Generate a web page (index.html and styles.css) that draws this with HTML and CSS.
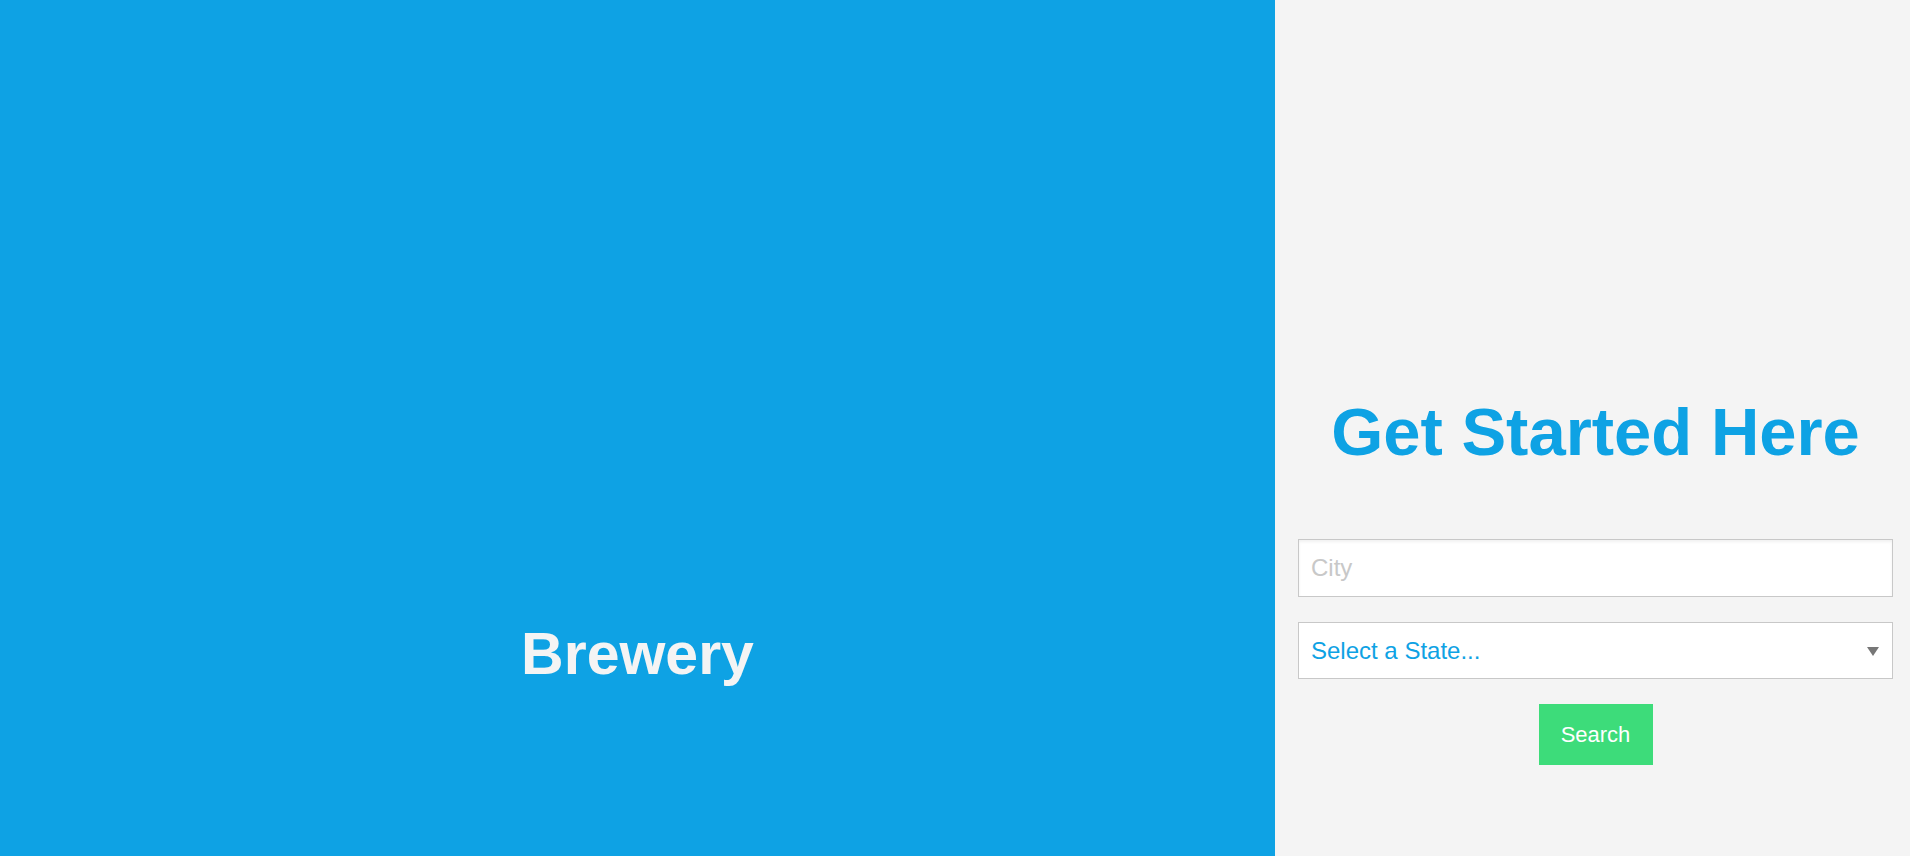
FILE: index.html
```html
<!DOCTYPE html>
<html lang="en">
<head>
<meta charset="utf-8">
<title>Brewery</title>
<link rel="stylesheet" href="styles.css">
</head>
<body>
<main class="page">
  <section class="hero">
    <h2 class="brand">Brewery</h2>
  </section>
  <section class="panel">
    <h1 class="title">Get Started Here</h1>
    <form class="search-form">
      <input class="field" type="text" placeholder="City">
      <div class="select-wrap">
        <select class="field select">
          <option>Select a State...</option>
        </select>
      </div>
      <div class="actions">
        <button class="btn" type="button">Search</button>
      </div>
    </form>
  </section>
</main>
</body>
</html>
```
FILE: styles.css
```css
html, body {
  margin: 0;
  padding: 0;
  height: 100%;
}
body {
  font-family: "Liberation Sans", Arial, sans-serif;
  background: #f4f4f4;
}
.page {
  display: flex;
  height: 856px;
  overflow: hidden;
}
.hero {
  width: 1275px;
  flex: none;
  background: #0ea2e4;
  box-sizing: border-box;
  padding-top: 621px;
  text-align: center;
}
.brand {
  margin: 0;
  font-size: 59px;
  font-weight: bold;
  color: #f4f4f4;
  line-height: 66px;
}
.panel {
  flex: 1;
  background: #f4f4f4;
  box-sizing: border-box;
  padding: 393px 17px 0 23px;
}
.title {
  margin: 0 0 68px;
  text-align: center;
  font-size: 67px;
  line-height: 78px;
  font-weight: bold;
  color: #0ea2e4;
}
.search-form {
  display: flex;
  flex-direction: column;
  gap: 25px;
}
.field {
  display: block;
  width: 100%;
  box-sizing: border-box;
  height: 58px;
  margin: 0;
  padding: 0 12px;
  border: 1px solid #c8c8c8;
  border-radius: 0;
  background: #fff;
  font-family: "Liberation Sans", Arial, sans-serif;
  font-size: 24px;
  outline: none;
}
input.field {
  box-shadow: inset 0 2px 3px rgba(0, 0, 0, 0.06);
  color: #333;
}
input.field::placeholder {
  color: #c8c8c8;
}
.select-wrap {
  position: relative;
}
.select {
  height: 57px;
  -webkit-appearance: none;
  appearance: none;
  color: #0ea2e4;
  padding-left: 12px;
}
.select-wrap::after {
  content: "";
  position: absolute;
  right: 14px;
  top: 25px;
  width: 0;
  height: 0;
  border-left: 6px solid transparent;
  border-right: 6px solid transparent;
  border-top: 9px solid #777;
  pointer-events: none;
}
.actions {
  display: flex;
  justify-content: center;
}
.btn {
  width: 114px;
  height: 61px;
  border: none;
  border-radius: 0;
  background: #3ddc7a;
  color: #fff;
  font-family: "Liberation Sans", Arial, sans-serif;
  font-size: 22px;
  padding: 0;
  cursor: pointer;
}
```
